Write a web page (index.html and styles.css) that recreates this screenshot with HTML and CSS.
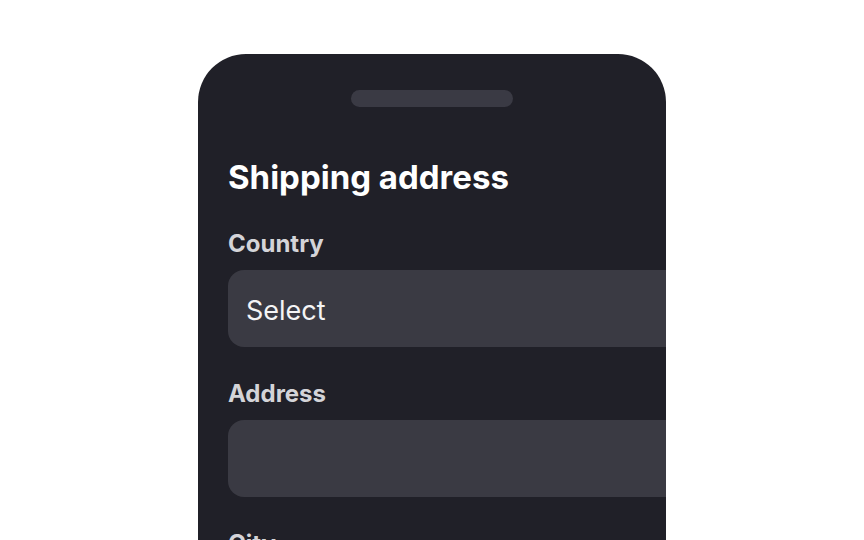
FILE: index.html
```html
<!DOCTYPE html>
<html lang="en">
<head>
<meta charset="utf-8">
<title>Shipping address</title>
<link rel="stylesheet" href="styles.css">
</head>
<body>
<div class="stage">
  <div class="phone">
    <div class="handle"></div>
    <h1 class="title">Shipping address</h1>
    <div class="field">
      <label class="label">Country</label>
      <div class="input"><span class="value">Select</span></div>
    </div>
    <div class="field">
      <label class="label">Address</label>
      <div class="input"></div>
    </div>
    <div class="field">
      <label class="label">City</label>
      <div class="input"></div>
    </div>
  </div>
</div>
</body>
</html>
```

FILE: styles.css
```css
html, body {
  margin: 0;
  padding: 0;
  background: #ffffff;
  overflow: hidden;
}
body {
  font-family: Inter, "Noto Sans", sans-serif;
  width: 864px;
  height: 540px;
}
.stage {
  padding-top: 54px;
  display: flex;
  justify-content: center;
}
.phone {
  width: 468px;
  height: 560px;
  background: #202028;
  border-radius: 48px 48px 0 0;
  overflow: hidden;
  padding: 36px 30px 0;
  box-sizing: border-box;
  display: flex;
  flex-direction: column;
}
.handle {
  align-self: center;
  width: 162px;
  height: 17px;
  border-radius: 9px;
  background: #3a3a44;
  flex-shrink: 0;
}
.title {
  margin: 50px 0 0;
  font-size: 33px;
  line-height: 40px;
  font-weight: 700;
  color: #ffffff;
  letter-spacing: 0;
}
.field {
  display: flex;
  flex-direction: column;
  margin-top: 33px;
  flex-shrink: 0;
}
.field + .field {
  margin-top: 33px;
}
.label {
  font-size: 24px;
  line-height: 28px;
  font-weight: 650;
  color: #d4d4d8;
}
.input {
  margin-top: 12px;
  width: 520px;
  height: 77px;
  border-radius: 16px;
  background: #3a3a43;
  display: flex;
  align-items: center;
  padding: 3px 0 0 18px;
  box-sizing: border-box;
}
.value {
  font-size: 27px;
  color: #f4f4f5;
  font-weight: 400;
}
```
